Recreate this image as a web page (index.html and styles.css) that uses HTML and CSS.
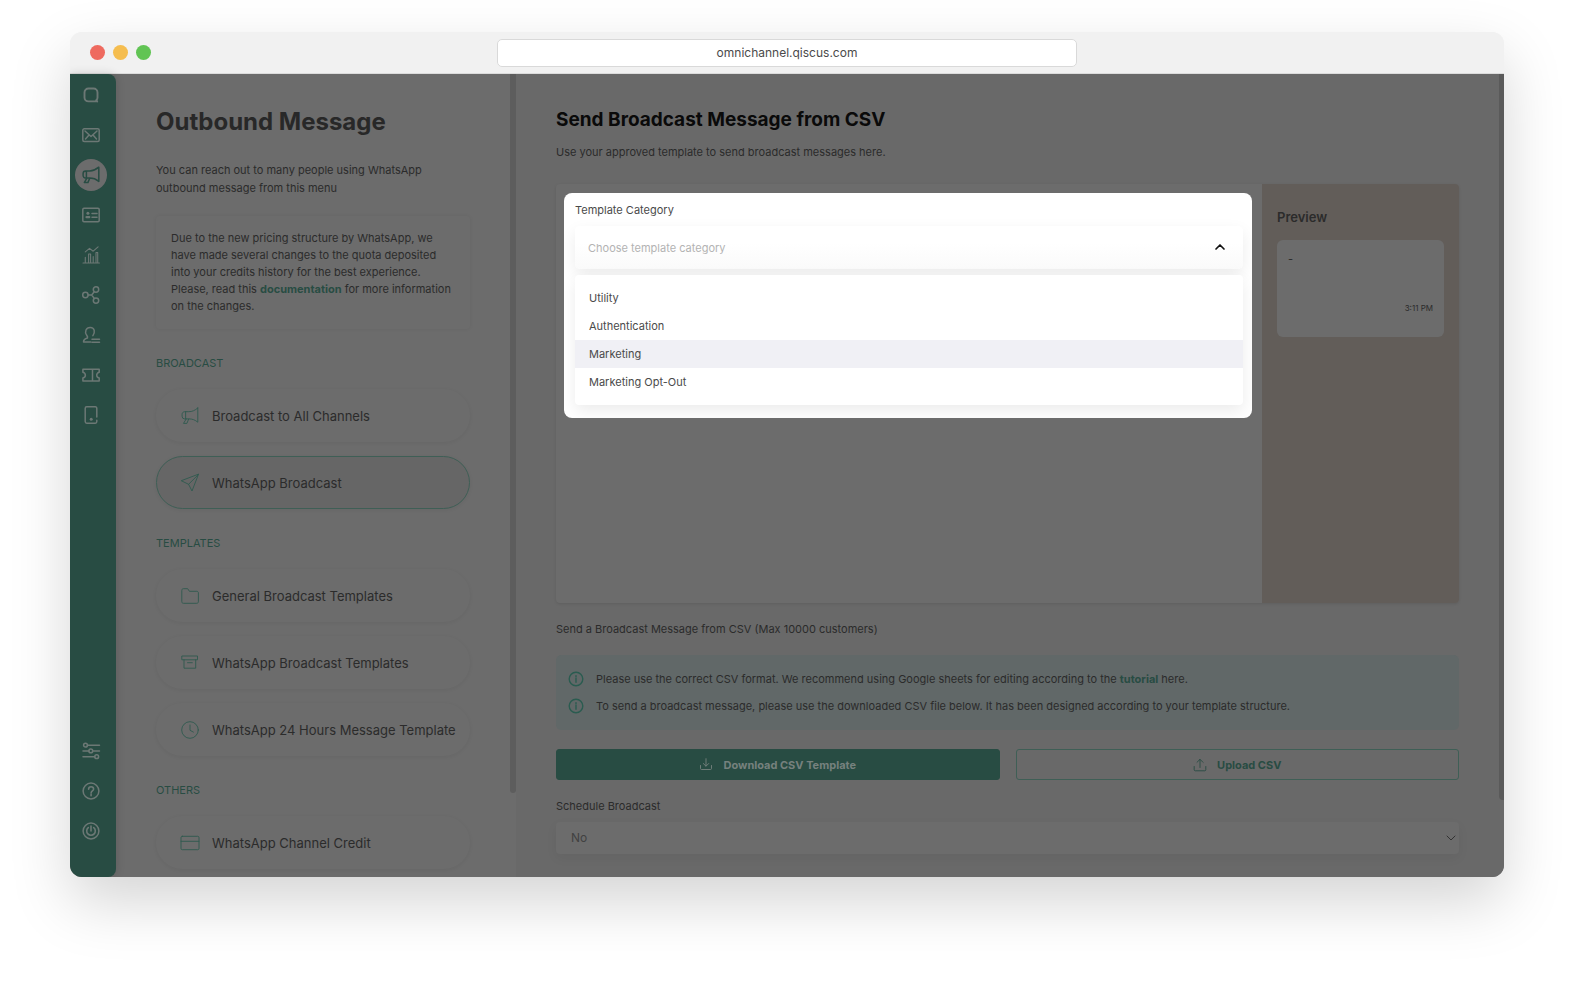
FILE: index.html
```html
<!DOCTYPE html>
<html lang="en">
<head>
<meta charset="utf-8">
<meta name="viewport" content="width=device-width, initial-scale=1">
<title>Outbound Message</title>
<link rel="stylesheet" href="styles.css">
</head>
<body>
<div class="page">
<div class="window">
  <header class="titlebar">
    <div class="lights"><span class="light red"></span><span class="light yellow"></span><span class="light green"></span></div>
    <input class="address" type="text" aria-label="Address" value="omnichannel.qiscus.com">
  </header>
  <div class="app">
    <nav class="rail" aria-label="Main">
      <div class="rail-group">
        <a class="rail-link" href="#" aria-label="Home"><svg viewBox="0 0 20 20"><path stroke-width="1.9" d="M16.2 16.4H7.5a4 4 0 0 1-4-4V7.5a4 4 0 0 1 4-4h5a4 4 0 0 1 4 4v5.2c0 1.200-.6 2-1.300 2.500l1 1.200"/></svg></a>
        <a class="rail-link" href="#" aria-label="Inbox"><svg viewBox="0 0 20 20"><rect x="1.800" y="3.800" width="16.400" height="12.700" rx="1.500"/><path d="M4 6l6 5.500L16 6M4.500 14l3.300-3.800M15.500 14l-3.300-3.800"/></svg></a>
        <a class="rail-link active" href="#" aria-label="Outbound"><svg viewBox="0 0 20 20"><path d="M17.800 2.200v14.200c-3-2.400-5.600-3.300-9-3.300H4.600a2.600 2.600 0 0 1-2.500-2.700V8.600c0-1.500 1.200-2.700 2.600-2.700h4.100c3.400 0 6-1.200 9-3.700zM5.400 6v7M8.700 13.200L6.900 17.600H3.300l2.600-4.400"/></svg></a>
        <a class="rail-link" href="#" aria-label="Contacts"><svg viewBox="0 0 20 20"><rect x="1.800" y="3.300" width="16.400" height="13.400" rx="1.200"/><circle cx="6.900" cy="8.200" r="1.500" class="solid"/><rect x="4.400" y="10.900" width="5" height="2.400" rx="1.200" class="solid"/><path d="M11 8.400h5M11 12.300h5"/></svg></a>
        <a class="rail-link" href="#" aria-label="Analytics"><svg class="fine" viewBox="0 0 20 20"><path d="M2 18h16.400M4.300 18v-5.800M7.600 18V9h2v9M12.200 18v-6.500M15 18V7.500h1.700V18M4.300 6.900l4.200-3.500 3.700 2.800 4.900-4.400"/></svg></a>
        <a class="rail-link" href="#" aria-label="Integrations"><svg viewBox="0 0 20 20"><circle cx="4.400" cy="10" r="2.700"/><circle cx="15" cy="4.500" r="2.700"/><circle cx="15" cy="15.600" r="2.700"/><path d="M7.100 10h3.600l2.500-3.300M10.700 10l2.500 3.400"/></svg></a>
        <a class="rail-link" href="#" aria-label="Agents"><svg viewBox="0 0 20 20"><path d="M9.700 17H2.500c0-2 .8-3.200 4-4 .3-.8.100-1.600-.8-2.800-1-1.300-1.300-3.800-.7-5.200 1.500-3.400 7.300-3.300 8.200.4.600 2.600-.4 4-1.300 5.200M11 14.300h7.500M11 17.200h7.500"/></svg></a>
        <a class="rail-link" href="#" aria-label="Tickets"><svg viewBox="0 0 20 20"><path d="M1.900 4.200h16.300v3.100c-3.300 1.100-3.300 4.600 0 5.700v3.100H1.900V13c3.300-1.100 3.300-4.600 0-5.700zM11.500 4.200v11.900"/></svg></a>
        <a class="rail-link" href="#" aria-label="Devices"><svg viewBox="0 0 20 20"><path d="M15.800 12V3.400c0-.9-.6-1.600-1.500-1.600H5.700c-.9 0-1.500.7-1.500 1.600v13.200c0 .9.600 1.600 1.500 1.600h8.600c.9 0 1.500-.7 1.500-1.600v-1.300"/><circle cx="10.200" cy="14.200" r="1.500" class="solid"/></svg></a>
      </div>
      <div class="rail-group">
        <a class="rail-link" href="#" aria-label="Settings"><svg viewBox="0 0 20 20"><path d="M6.500 4.200h12M2 9.900h5.800M11.800 9.900h6.700M2 15.700h11.700"/><circle cx="4.500" cy="4.200" r="1.900"/><circle cx="9.800" cy="9.900" r="1.900"/><circle cx="15.700" cy="15.700" r="1.900"/></svg></a>
        <a class="rail-link" href="#" aria-label="Help"><svg viewBox="0 0 20 20"><circle cx="10" cy="10" r="7.900"/><path stroke-width="1.600" d="M7.600 8.200c0-1.600 1-2.500 2.500-2.500s2.500 1 2.500 2.300c0 2-2.500 1.900-2.500 4M10.100 13.300v1.500"/></svg></a>
        <a class="rail-link" href="#" aria-label="Log out"><svg viewBox="0 0 20 20"><circle cx="10" cy="10" r="7.900"/><path stroke-width="1.600" d="M10 5v5M7.300 6.600a4.300 4.300 0 1 0 5.400 0"/></svg></a>
      </div>
    </nav>

    <aside class="side">
      <div class="side-body">
        <h1 class="side-title">Outbound Message</h1>
        <p class="intro">You can reach out to many people using WhatsApp outbound message from this menu</p>
        <p class="notice">Due to the new pricing structure by WhatsApp, we have made several changes to the quota deposited into your credits history for the best experience. Please, read this <a class="link" href="#">documentation</a> for more information on the changes.</p>
        <section class="menu">
          <h2 class="menu-title">BROADCAST</h2>
          <a class="pill" href="#"><svg viewBox="0 0 20 20"><path d="M17.800 2v14.200c-3-2.500-5.600-3.300-9-3.300H4.600a2.600 2.600 0 0 1-2.500-2.600V8.200c0-1.500 1.200-2.500 2.600-2.500h4.100c3.400 0 6-1.200 9-3.700zM5.600 5.700v7.200M8.700 13L6.900 17.400H3.500l2.700-4.400"/></svg>Broadcast to All Channels</a>
          <a class="pill current" href="#"><svg viewBox="0 0 20 20"><path d="M18.400 1.500L12 18 8.600 11.300 1.600 7.900zM8.600 11.300l9.800-9.800"/></svg>WhatsApp Broadcast</a>
        </section>
        <section class="menu">
          <h2 class="menu-title">TEMPLATES</h2>
          <a class="pill" href="#"><svg viewBox="0 0 20 20"><path d="M1.800 4.200c0-.9.600-1.500 1.500-1.500h4.400l1.700 2.600h7.400c.9 0 1.600.6 1.600 1.500v9c0 .9-.7 1.500-1.600 1.500H3.300c-.9 0-1.500-.6-1.500-1.500z"/></svg>General Broadcast Templates</a>
          <a class="pill" href="#"><svg viewBox="0 0 20 20"><path d="M2.200 3h15.300v3.800H2.200zM4 6.800v8.400h11.700V6.800M7.500 9.700h4.800"/></svg>WhatsApp Broadcast Templates</a>
          <a class="pill" href="#"><svg viewBox="0 0 20 20"><circle cx="10" cy="10" r="8.300"/><path d="M10 5v5.300l3.400 1.800"/></svg>WhatsApp 24 Hours Message Template</a>
        </section>
        <section class="menu">
          <h2 class="menu-title">OTHERS</h2>
          <a class="pill" href="#"><svg viewBox="0 0 20 20"><rect x="1" y="3.300" width="18" height="13.400" rx="1.300"/><path d="M1 8.300h18"/></svg>WhatsApp Channel Credit</a>
        </section>
      </div>
      <div class="scroll side-scroll"></div>
    </aside>

    <main class="main">
      <div class="main-body">
        <h2 class="main-title">Send Broadcast Message from CSV</h2>
        <p class="sub">Use your approved template to send broadcast messages here.</p>
        <div class="card">
          <div class="card-form">
            <div class="spotlight">
              <label class="label" for="category">Template Category</label>
              <div class="picker">
                <select id="category" class="picker-field"><option>Choose template category</option><option>Utility</option><option>Authentication</option><option>Marketing</option><option>Marketing Opt-Out</option></select>
                <svg class="picker-icon" viewBox="0 0 12 12"><path d="M2 8l4-4 4 4"/></svg>
              </div>
              <ul class="options" role="listbox" aria-label="Template Category">
                <li class="option" role="option">Utility</li>
                <li class="option" role="option">Authentication</li>
                <li class="option hover" role="option" aria-selected="true">Marketing</li>
                <li class="option" role="option">Marketing Opt-Out</li>
              </ul>
            </div>
          </div>
          <div class="preview">
            <h3 class="preview-title">Preview</h3>
            <div class="bubble"><span>-</span><time class="time">3:11 PM</time></div>
          </div>
        </div>
        <p class="caption">Send a Broadcast Message from CSV (Max 10000 customers)</p>
        <div class="info">
          <p class="info-row"><svg viewBox="0 0 16 16"><circle cx="8" cy="8" r="6.800"/><path d="M8 7.300v4M8 4.600v1.200"/></svg><span>Please use the correct CSV format. We recommend using Google sheets for editing according to the <a class="link" href="#">tutorial</a> here.</span></p>
          <p class="info-row"><svg viewBox="0 0 16 16"><circle cx="8" cy="8" r="6.800"/><path d="M8 7.300v4M8 4.600v1.200"/></svg><span>To send a broadcast message, please use the downloaded CSV file below. It has been designed according to your template structure.</span></p>
        </div>
        <div class="actions">
          <button class="btn filled" type="button"><svg viewBox="0 0 14 14"><path d="M1.500 7.500v3c0 .6.400 1 1 1h9c.6 0 1-.4 1-1v-3M7 .7V8M4.300 5.500L7 8.200l2.700-2.700"/></svg>Download CSV Template</button>
          <button class="btn outline" type="button"><svg viewBox="0 0 14 14"><path d="M1.200 8.500v3.300c0 .6.400 1 1 1h9.600c.6 0 1-.4 1-1V8.500M7 9.500V1.500M4 4.300l3-3 3 3"/></svg>Upload CSV</button>
        </div>
        <label class="caption" for="schedule">Schedule Broadcast</label>
        <div class="drop">
          <select id="schedule" class="drop-field"><option>No</option><option>Yes</option></select>
          <svg class="drop-icon" viewBox="0 0 12 12"><path d="M2 4l4 4 4-4"/></svg>
        </div>
      </div>
      <div class="scroll main-scroll"></div>
    </main>
  </div>
</div>
</div>
</body>
</html>
```
FILE: styles.css
```css
* { box-sizing: border-box; }
body, h1, h2, h3, p, ul { margin: 0; padding: 0; }
body {
  background: #fff;
  color: #2b2b2b;
  font-family: Inter, "Liberation Sans", sans-serif;
  font-size: 11px;
  line-height: 16px;
}
svg { fill: none; stroke: currentColor; stroke-linecap: round; stroke-linejoin: round; flex: none; }
a { color: inherit; text-decoration: none; }
input, select, button { font: inherit; }

.page {
  display: flex;
  min-height: 100vh;
  padding: 32px 70px 109px;
}
.window {
  flex: 1;
  min-width: 0;
  display: flex;
  flex-direction: column;
  border-radius: 12px;
  overflow: hidden;
  background: #f1f1f1;
  box-shadow: 0 25px 60px rgba(0, 0, 0, 0.17);
}

.titlebar {
  display: grid;
  grid-template-columns: 1fr minmax(0, 580px) 1fr;
  align-items: center;
  height: 42px;
  padding: 0 20px;
  background: #f1f1f1;
  border-bottom: 1px solid #dcdcdc;
}
.lights { display: flex; gap: 8px; }
.light { width: 15px; height: 15px; border-radius: 50%; }
.red { background: #ee6a5f; }
.yellow { background: #f5bd4f; }
.green { background: #61c454; }
.address {
  width: 100%;
  height: 28px;
  border: 1px solid #d9d9d9;
  border-radius: 5px;
  background: #fff;
  color: #4a4a4a;
  font-size: 12px;
  text-align: center;
}

.app { flex: 1; display: flex; background: #6c6c6c; }

.rail {
  display: flex;
  flex-direction: column;
  justify-content: space-between;
  width: 46px;
  padding: 5px 5px 30px;
  border-radius: 0 8px 8px 0;
  background: #284c43;
  color: #6c7875;
  box-shadow: 0 0 10px rgba(0, 0, 0, 0.16);
  z-index: 1;
}
.rail-group { display: grid; gap: 8px; }
.rail-link {
  display: grid;
  place-items: center;
  width: 32px;
  height: 32px;
  border-radius: 50%;
}
.rail-link svg { width: 20px; height: 20px; stroke-width: 1.5; }
.rail-link .fine { stroke-width: 1.1; }
.rail-link .solid { fill: currentColor; stroke: none; }
.rail-link.active { background: #6c6c6c; color: #284c43; }

.side { display: flex; flex: 0 0 400px; min-width: 0; background: #6c6c6c; }
.side-body { flex: 1; min-width: 0; padding: 32px 40px 7px; }
.scroll { flex: none; width: 6px; background: #5d5d5d; border-radius: 0 0 4px 4px; }
.side-scroll { margin-bottom: 84px; }
.side-title { font-size: 24px; line-height: 32px; font-weight: 700; color: #282828; }
.intro { margin-top: 23px; line-height: 18px; }
.notice {
  margin-top: 19px;
  padding: 14px 13px 14px 15px;
  line-height: 17px;
  border-radius: 4px;
  box-shadow: 0 0 4px rgba(0, 0, 0, 0.06);
}
.link { color: #284c43; font-weight: 700; }
.menu { display: grid; grid-template-columns: minmax(0, 1fr); gap: 14px; margin-top: 26px; }
.menu-title { margin-bottom: 4px; font-size: 11px; font-weight: 400; color: #284c43; }
.pill {
  display: flex;
  align-items: center;
  gap: 12px;
  height: 53px;
  padding: 0 12px 0 23px;
  border: 1px solid transparent;
  border-radius: 27px;
  font-size: 13px;
  white-space: nowrap;
  box-shadow: 0 1px 4px rgba(0, 0, 0, 0.06);
}
.pill svg { width: 20px; height: 20px; color: #2f5a4f; stroke-width: 0.9; }
.pill.current { background: #666; border-color: #3f5f56; }

.main { flex: 1; display: flex; min-width: 0; background: #696969; }
.main-body { flex: 1; min-width: 0; padding: 34px 40px 20px; }
.main-scroll { width: 5px; margin-bottom: 77px; background: #5a5a5a; border-radius: 0 0 0 4px; }
.main-title { font-size: 19px; line-height: 24px; font-weight: 700; color: #0a0a0a; }
.sub { margin-top: 12px; }
.card {
  display: flex;
  min-height: 419px;
  margin-top: 24px;
  border-radius: 4px;
  background: #6c6c6c;
  box-shadow: 0 1px 3px rgba(0, 0, 0, 0.1);
}
.card-form { flex: 1; min-width: 0; padding: 9px 10px 9px 8px; }
.spotlight {
  padding: 9px 9px 13px 11px;
  border-radius: 8px;
  overflow: hidden;
  background: #fff;
  color: #4a4a4a;
}
.label { display: block; }
.picker { position: relative; margin-top: 8px; }
.picker-field {
  appearance: none;
  display: block;
  width: 100%;
  height: 43px;
  padding: 0 40px 0 13px;
  border: 0;
  border-radius: 5px;
  background: linear-gradient(#fff 40%, #fafafa);
  box-shadow: 0 6px 16px rgba(0, 0, 0, 0.08);
  color: #b3b3b3;
}
.picker-icon { position: absolute; top: 15px; right: 17px; width: 12px; height: 12px; color: #111; stroke-width: 1.7; }
.options {
  position: relative;
  margin-top: 6px;
  padding: 9px 0;
  list-style: none;
  border-radius: 4px;
  background: #fff;
  box-shadow: 0 6px 16px rgba(0, 0, 0, 0.08);
}
.option { padding: 6px 14px; }
.option.hover { background: #f0f0f5; }

.preview {
  flex: 0 0 197px;
  padding: 23px 15px;
  border-radius: 0 4px 4px 0;
  background: #625d59;
}
.preview-title { font-size: 13px; line-height: 20px; font-weight: 600; }
.bubble {
  display: flex;
  flex-direction: column;
  justify-content: space-between;
  height: 97px;
  margin-top: 13px;
  padding: 11px 11px 21px;
  border-radius: 6px;
  background: #6c6c6c;
}
.time { align-self: flex-end; font-size: 8px; }

.caption { display: block; margin-top: 18px; }
.info {
  display: grid;
  gap: 11px;
  margin-top: 18px;
  padding: 16px 12px;
  border-radius: 5px;
  background: #616868;
}
.info-row { display: flex; align-items: center; gap: 12px; }
.info-row svg { width: 16px; height: 16px; color: #2a5c50; stroke-width: 1.4; }
.actions { display: grid; grid-template-columns: 1fr 1fr; gap: 16px; margin-top: 19px; }
.btn {
  display: flex;
  align-items: center;
  justify-content: center;
  gap: 10px;
  height: 31px;
  padding: 0 12px;
  border: 1px solid #3f5f56;
  border-radius: 3px;
  background: none;
  font-weight: 700;
  color: #284c43;
}
.btn svg { width: 14px; height: 14px; stroke-width: 0.9; }
.btn.filled { border-color: #284c43; background: #284c43; color: #76817e; }
.drop { position: relative; margin-top: 8px; }
.drop-field {
  appearance: none;
  display: block;
  width: 100%;
  height: 32px;
  padding: 0 30px 0 15px;
  border: 0;
  border-radius: 4px;
  background: #6c6c6c;
  box-shadow: 0 4px 12px rgba(0, 0, 0, 0.05);
  color: #414141;
  font-size: 12px;
}
.drop-icon { position: absolute; top: 10px; right: 2px; width: 12px; height: 12px; color: #333; stroke-width: 1; }
```
